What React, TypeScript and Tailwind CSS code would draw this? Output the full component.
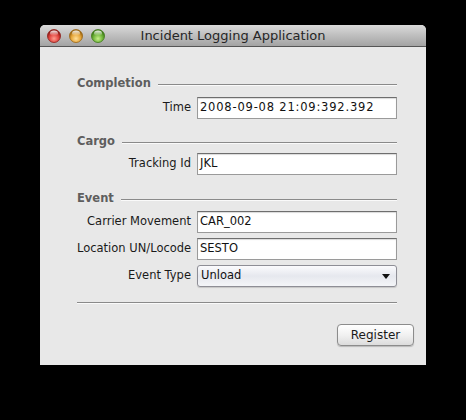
import type { ReactNode } from "react";

const font = { fontFamily: '"DejaVu Sans", "Liberation Sans", sans-serif' };

// Glossy window button, drawn as a small radial-gradient circle.
const Light = ({ id, base, dark, light }: { id: string; base: string; dark: string; light: string }) => (
  <svg width="14" height="14" viewBox="0 0 14 14">
    <defs>
      <radialGradient id={`${id}-g`} cx="50%" cy="70%" r="60%">
        <stop offset="0%" stopColor={light} />
        <stop offset="60%" stopColor={base} />
        <stop offset="100%" stopColor={dark} />
      </radialGradient>
      <linearGradient id={`${id}-h`} x1="0" y1="0" x2="0" y2="1">
        <stop offset="0%" stopColor="#fff" stopOpacity="0.9" />
        <stop offset="100%" stopColor="#fff" stopOpacity="0" />
      </linearGradient>
    </defs>
    <circle cx="7" cy="7" r="6.5" fill={`url(#${id}-g)`} stroke={dark} strokeWidth="0.8" />
    <ellipse cx="7" cy="4.2" rx="4" ry="2.6" fill={`url(#${id}-h)`} />
  </svg>
);

const SectionHeader = ({ title, className }: { title: string; className?: string }) => (
  <div className={`flex items-center h-[16px] ${className ?? ""}`}>
    <span className="text-[11.5px] font-bold text-[#5e5e5e] leading-none pr-[7px]">{title}</span>
    <div className="flex-1 h-[1px] bg-[#8a8a8a] shadow-[0_1px_0_#fafafa]" />
  </div>
);

const Row = ({ label, children, className }: { label: string; children: ReactNode; className?: string }) => (
  <div className={`flex items-center h-[22px] ${className ?? ""}`}>
    <span className="w-[120px] shrink-0 whitespace-nowrap text-right pr-[6px] text-[11.5px] text-[#1a1a1a] leading-none">
      {label}
    </span>
    {children}
  </div>
);

const Field = ({ value, className }: { value: string; className?: string }) => (
  <div
    className={`w-[200px] h-[22px] bg-white border border-[#9a9a9a] border-t-[#6e6e6e] shadow-[inset_0_1px_1px_rgba(0,0,0,0.15)] flex items-center px-[2px] text-[11.5px] text-[#111] leading-none ${className ?? ""}`}
  >
    {value}
  </div>
);

export default function App() {
  return (
    <div className="w-[466px] h-[420px] bg-black pt-[25px] pl-[40px]" style={font}>
      <div className="w-[386px] h-[340px] bg-[#e8e8e8] rounded-t-[5px] flex flex-col overflow-hidden">
        <div className="h-[22px] shrink-0 flex items-center relative bg-gradient-to-b from-[#dadada] to-[#a3a3a3] border-b border-[#555]">
          <div className="flex items-center gap-[8px] pl-[7px]">
            <Light id="r" base="#e0443e" dark="#8e1b16" light="#ff9d90" />
            <Light id="y" base="#e6a63a" dark="#9a6510" light="#ffe09a" />
            <Light id="g" base="#6fb43a" dark="#3e7a17" light="#c7f08a" />
          </div>
          <span className="absolute inset-0 flex items-center justify-center text-[13px] text-[#262626] leading-none">
            Incident Logging Application
          </span>
        </div>

        <div className="flex flex-col pl-[37px] pr-[29px]">
          <SectionHeader title="Completion" className="mt-[29px]" />
          <Row label="Time" className="mt-[5px]">
            <Field value="2008-09-08 21:09:392.392" className="tracking-[0.8px]" />
          </Row>

          <SectionHeader title="Cargo" className="mt-[15px]" />
          <Row label="Tracking Id" className="mt-[3px]">
            <Field value="JKL" />
          </Row>

          <SectionHeader title="Event" className="mt-[16px]" />
          <Row label="Carrier Movement" className="mt-[4px]">
            <Field value="CAR_002" />
          </Row>
          <Row label="Location UN/Locode" className="mt-[5px]">
            <Field value="SESTO" />
          </Row>
          <Row label="Event Type" className="mt-[5px]">
            <div className="w-[200px] h-[22px] rounded-[3px] border border-[#8e8e96] bg-gradient-to-b from-[#fbfbfd] via-[#e6e8ee] to-[#f4f5f8] flex items-center justify-between pl-[3px] pr-[6px] text-[11.5px] text-[#111] leading-none shadow-[0_1px_1px_rgba(0,0,0,0.15)]">
              <span>Unload</span>
              <svg width="8" height="5" viewBox="0 0 8 5">
                <path d="M0 0 H8 L4 5 Z" fill="#111" />
              </svg>
            </div>
          </Row>

          <div className="mt-[15px] h-[1px] bg-[#8a8a8a] shadow-[0_1px_0_#fafafa]" />

          <div className="flex justify-end mt-[21px] -mr-[17px]">
            <button className="w-[77px] h-[22px] rounded-[4px] border border-[#8c8c8c] bg-gradient-to-b from-[#ffffff] via-[#f1f1f1] to-[#dcdcdc] text-[12px] text-[#1a1a1a] leading-none shadow-[0_1px_1px_rgba(0,0,0,0.2)]">
              Register
            </button>
          </div>
        </div>
      </div>
    </div>
  );
}
